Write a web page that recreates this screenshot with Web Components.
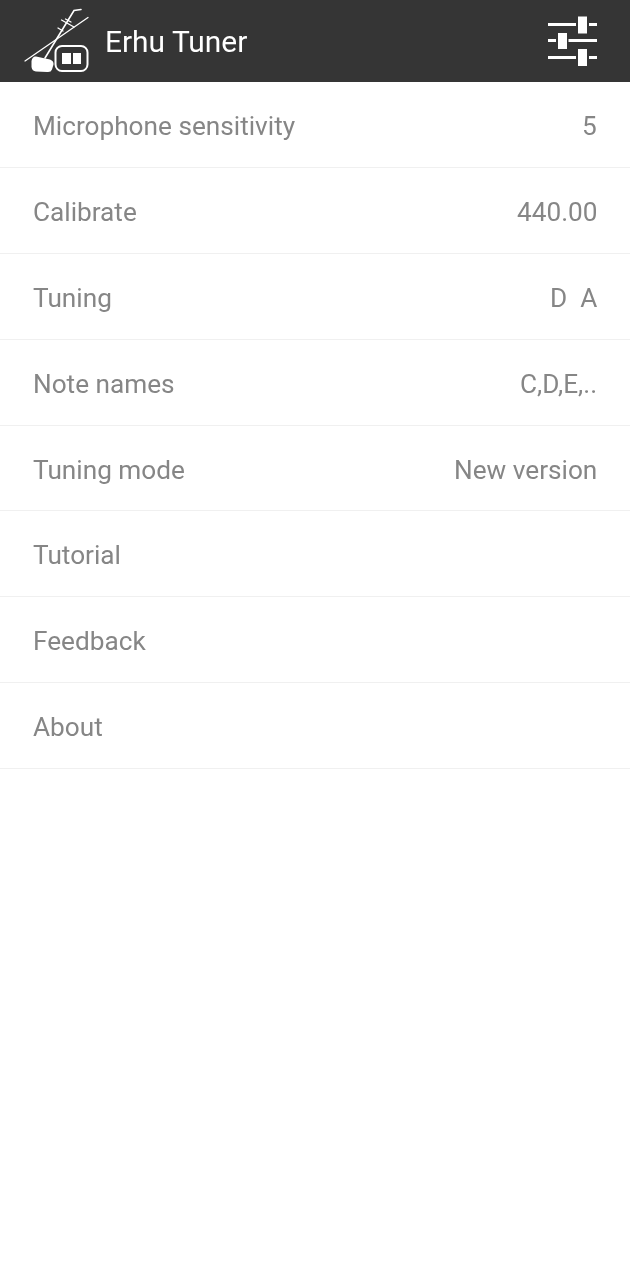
<!DOCTYPE html>
<html>
<head>
<meta charset="utf-8">
<title>Erhu Tuner</title>
<style>
    html, body {
        margin: 0;
        padding: 0;
        background-color: #ffffff;
    }
</style>
</head>
<body>
<tuner-app>
    <tuner-row label="Microphone sensitivity" value="5"></tuner-row>
    <tuner-row label="Calibrate" value="440.00"></tuner-row>
    <tuner-row label="Tuning" value="D&#160;&#160;A"></tuner-row>
    <tuner-row label="Note names" value="C,D,E,.."></tuner-row>
    <tuner-row label="Tuning mode" value="New version"></tuner-row>
    <tuner-row label="Tutorial"></tuner-row>
    <tuner-row label="Feedback"></tuner-row>
    <tuner-row label="About"></tuner-row>
</tuner-app>

<script>
const headerTemplate = document.createElement ("template");
headerTemplate.innerHTML = `
<style>
    :host {
        display: flex;
        align-items: center;
        justify-content: space-between;
        height: 82px;
        background-color: #353535;
        color: #ffffff;
        font-family: Roboto, "Liberation Sans", sans-serif;
    }

    #brand {
        display: flex;
        align-items: center;
    }

    #logo {
        width: 75px;
        height: 72px;
        margin-left: 20px;
        display: block;
    }

    #title {
        font-size: 29.900px;
        margin-left: 10px;
        will-change: transform;
    }

    #settings {
        width: 60px;
        height: 60px;
        margin-right: 23px;
        display: block;
    }
</style>
<div id="brand">
    <svg id="logo" viewBox="20 5 75 72">
        <g fill="none" stroke="#fff" stroke-linecap="round">
            <path d="M25 61 L88 17.500" stroke-width="1.300"/>
            <path d="M45 58 L74 10.500 L81 9.500" stroke-width="1.600"/>
            <path d="M61.500 20 L74 27 M65.500 19 L71 22 M58 28 L63 31" stroke-width="1.300"/>
            <rect x="55.500" y="46" width="32" height="25" rx="6.500" stroke-width="2"/>
        </g>
        <path fill="#fff" d="M36 56.500 L50 59.500 Q54 61 53.500 64.500 L52 69.500 Q51 72.500 47 72 L36 71.500 Q32 71 31.500 67 L31.500 61 Q32.500 56 36 56.500 Z"/>
        <path fill="#fff" d="M62 53 H71 V64 H62 Z M73 53 H81 V64 H73 Z"/>
    </svg>
    <span id="title">Erhu Tuner</span>
</div>
<svg id="settings" viewBox="547 12 60 60">
    <g fill="#fff">
        <rect x="548" y="24" width="28" height="3"/>
        <rect x="589" y="24" width="8" height="3"/>
        <rect x="578" y="17.500" width="9" height="17"/>
        <rect x="548" y="40" width="8" height="3"/>
        <rect x="568.500" y="40" width="28.500" height="3"/>
        <rect x="558" y="34" width="9" height="16"/>
        <rect x="548" y="57" width="28" height="3"/>
        <rect x="589" y="57" width="8" height="3"/>
        <rect x="578" y="50" width="9" height="17"/>
    </g>
</svg>
`

class TunerHeader extends HTMLElement {
    constructor () {
        super ();
        this.attachShadow ({mode: 'open'});
    }

    connectedCallback () {
        this.shadowRoot.appendChild (headerTemplate.content.cloneNode (true));
    }
}

const rowTemplate = document.createElement ("template");
rowTemplate.innerHTML = `
<style>
    :host {
        display: flex;
        align-items: center;
        justify-content: space-between;
        box-sizing: border-box;
        height: 85.9px;
        padding: 3px 33px 0 33px;
        border-bottom: 1px solid #f0f0f0;
        color: #868686;
        font-family: Roboto, "Liberation Sans", sans-serif;
        font-size: 26.200px;
    }

    span {
        will-change: transform;
    }
</style>
<span id="label"></span>
<span id="value"></span>
`

class TunerRow extends HTMLElement {
    constructor () {
        super ();
        this.attachShadow ({mode: 'open'});
    }

    connectedCallback () {
        this.shadowRoot.appendChild (rowTemplate.content.cloneNode (true));
        this.shadowRoot.querySelector ("#label").textContent = this.getAttribute ("label");
        this.shadowRoot.querySelector ("#value").textContent = this.getAttribute ("value") || "";
    }
}

const appTemplate = document.createElement ("template");
appTemplate.innerHTML = `
<style>
    :host {
        display: block;
        min-height: 1280px;
        background-color: #ffffff;
    }

    #list {
        display: flex;
        flex-direction: column;
    }
</style>
<tuner-header></tuner-header>
<div id="list"><slot></slot></div>
`

class TunerApp extends HTMLElement {
    constructor () {
        super ();
        this.attachShadow ({mode: 'open'});
    }

    connectedCallback () {
        this.shadowRoot.appendChild (appTemplate.content.cloneNode (true));
    }
}

customElements.define ("tuner-header", TunerHeader);
customElements.define ("tuner-row", TunerRow);
customElements.define ("tuner-app", TunerApp);
</script>
</body>
</html>
